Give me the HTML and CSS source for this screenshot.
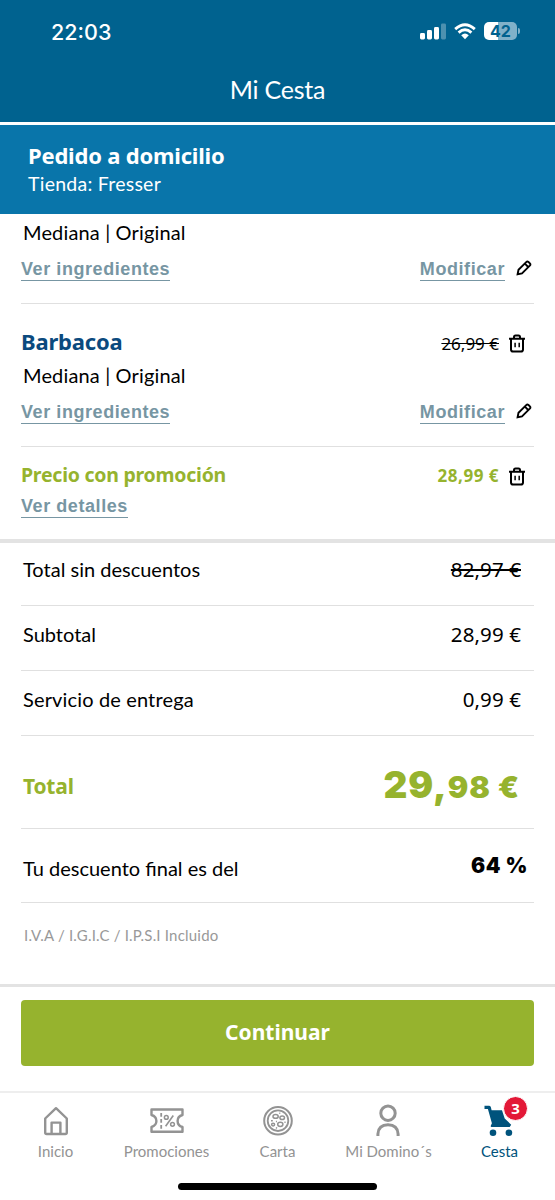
FILE: index.html
```html
<!DOCTYPE html>
<html lang="es">
<head>
  <meta charset="UTF-8" />
  <meta name="viewport" content="width=device-width, initial-scale=1.0" />
  <title>Mi Cesta</title>
  <link rel="stylesheet" href="styles.css">
</head>
<body>
  <svg class="sprite" width="0" height="0">
    <symbol id="pencil" viewBox="0 0 16 16">
      <path d="M1.6 14.2 2.5 9.8 10.2 2.1Q11.3 1 12.5 2L13.9 3.4Q14.9 4.5 13.8 5.7L6 13.4ZM8.9 3.7 12.2 7" />
    </symbol>
    <symbol id="trash" viewBox="0 0 18 19">
      <path d="M1 4.7H17M3 5V15.4Q3 17.5 5.1 17.5H12.9Q15 17.5 15 15.4V5M6 4.3V3Q6 1.5 7.5 1.5H10.5Q12 1.5 12 3V4.3" />
      <path d="M7.1 8.8V13.2M11.2 8.8V13.2" stroke-width="1.5" />
    </symbol>
  </svg>

  <header>
    <div class="status">
      <span class="clock">22:03</span>
      <div class="status-icons">
        <svg class="signal" width="26" height="17" viewBox="0 0 26 17" fill="#fff">
          <rect x="0" y="10" width="5" height="6.5" rx="1.4" />
          <rect x="7" y="7" width="5" height="9.5" rx="1.4" />
          <rect x="14" y="4" width="5" height="12.5" rx="1.4" />
          <rect x="21" y="0.5" width="5" height="16" rx="1.4" opacity="0.3" />
        </svg>
        <svg class="wifi" width="22" height="17" viewBox="0 0 22 17" fill="none" stroke="#fff" stroke-width="2.9">
          <path d="M1.2 6.1Q11 -2.6 20.8 6.1M4.6 9.7Q11 4 17.4 9.7" />
          <path d="M7.2 12.2Q11 8.8 14.8 12.2L11 16.3Z" fill="#fff" stroke="none" />
        </svg>
        <div class="battery">42</div>
      </div>
    </div>
    <h1>Mi Cesta</h1>
  </header>

  <section class="order">
    <h2>Pedido a domicilio</h2>
    <p>Tienda: Fresser</p>
  </section>

  <main>
    <article class="item first">
      <p class="size">Mediana | Original</p>
      <div class="line links">
        <a class="link">Ver ingredientes</a>
        <a class="link edit">Modificar</a>
        <svg class="icon pencil"><use href="#pencil" /></svg>
      </div>
    </article>

    <article class="item">
      <div class="line name">
        <h3>Barbacoa</h3>
        <span class="price"><s>26,99 €</s></span>
        <svg class="icon trash"><use href="#trash" /></svg>
      </div>
      <p class="size">Mediana | Original</p>
      <div class="line links">
        <a class="link">Ver ingredientes</a>
        <a class="link edit">Modificar</a>
        <svg class="icon pencil"><use href="#pencil" /></svg>
      </div>
    </article>

    <article class="item promo">
      <div class="line name">
        <h3>Precio con promoción</h3>
        <span class="price">28,99 €</span>
        <svg class="icon trash"><use href="#trash" /></svg>
      </div>
      <a class="link">Ver detalles</a>
    </article>

    <div class="totals">
      <div class="row before"><span>Total sin descuentos</span><span class="amount"><s>82,97 €</s></span></div>
      <div class="row"><span>Subtotal</span><span class="amount">28,99 €</span></div>
      <div class="row delivery"><span>Servicio de entrega</span><span class="amount">0,99 €</span></div>
      <div class="row total"><span>Total</span><span class="big">29,<small>98 €</small></span></div>
      <div class="row discount"><span>Tu descuento final es del</span><b>64 %</b></div>
      <p class="tax">I.V.A / I.G.I.C / I.P.S.I Incluido</p>
    </div>
  </main>

  <div class="checkout"><button>Continuar</button></div>

  <nav>
    <a class="tab">
      <svg width="40" height="36" viewBox="0 0 40 36">
        <path d="M9.2 15.5 20 5.2 30.8 15.5V29.5Q30.8 31 29.3 31H10.7Q9.2 31 9.2 29.5ZM15.6 31V19.6H24.4V31" />
      </svg>
      <span>Inicio</span>
    </a>
    <a class="tab">
      <svg width="40" height="36" viewBox="0 0 40 36">
        <path d="M4.5 6.5H35.5V12Q30.6 13.3 30.6 18T35.5 24V28.7H4.5V24Q9.4 22.5 9.4 18T4.5 12Z" />
        <path d="M14.2 10V26" stroke-width="1.8" stroke-dasharray="3.8 2.2" />
        <path d="M26.3 12.5 18.6 23.3" stroke-width="1.6" />
        <circle cx="19.3" cy="14.4" r="1.9" stroke-width="1.5" />
        <circle cx="25.5" cy="21.3" r="1.9" stroke-width="1.5" />
      </svg>
      <span>Promociones</span>
    </a>
    <a class="tab">
      <svg width="40" height="36" viewBox="0 0 40 36">
        <circle cx="20" cy="17.7" r="13.8" stroke-width="2" />
        <circle cx="20" cy="17.7" r="10.3" stroke-width="1.8" />
        <g stroke-width="1.5">
          <ellipse cx="17.6" cy="13.4" rx="2.6" ry="1.9" />
          <ellipse cx="24.2" cy="14.7" rx="2.3" ry="1.8" />
          <ellipse cx="15.1" cy="21.6" rx="1.5" ry="1.3" />
          <ellipse cx="22.3" cy="21.3" rx="2.6" ry="2.1" />
          <path d="M13 17.7h1.8M17.9 18.6h1M18 24.5l1 .8M26.4 19.2h1.2M21.3 10.2h1" />
        </g>
      </svg>
      <span>Carta</span>
    </a>
    <a class="tab account">
      <svg width="40" height="36" viewBox="0 0 40 36">
        <circle cx="20" cy="10.2" r="7.2" stroke-width="3" />
        <path d="M9.9 33V31Q10.5 21.8 20 21.8T30.1 31V33" stroke-width="3" />
      </svg>
      <span>Mi Domino´s</span>
    </a>
    <a class="tab active">
      <svg width="40" height="36" viewBox="0 0 40 36">
        <path d="M4.5 2.8H8.9Q10.3 2.8 10.8 4L11.6 7.3H22L24.7 15.5 31.2 21.7 29.7 24H11.6Q10.3 24 10.9 22.4L11.9 20.2 7.9 6.1H4.5Z" fill="#00537c" stroke="none" />
        <circle cx="13" cy="29.7" r="3.3" fill="#00537c" stroke="none" />
        <circle cx="28.9" cy="29.7" r="3.3" fill="#00537c" stroke="none" />
      </svg>
      <i class="badge">3</i>
      <span>Cesta</span>
    </a>
    <div class="home-bar"></div>
  </nav>
</body>
</html>
```
FILE: styles.css
```css
* {
  box-sizing: border-box;
  padding: 0;
  margin: 0;
}

body {
  width: 555px;
  height: 1200px;
  overflow: hidden;
  background: #fff;
  color: #000;
  font-family: Lato, 'Noto Sans', sans-serif;
  font-size: 19px;
}

.sprite {
  display: block;
}

header {
  height: 125px;
  background: #00628f;
  border-bottom: 3px solid #fff;
  color: #fff;
}

.status {
  display: flex;
  justify-content: space-between;
  height: 63px;
  padding: 17px 38px 0 51px;
}

.clock {
  font-family: Inter, sans-serif;
  font-size: 21.5px;
  font-weight: 500;
  line-height: 30px;
}

.status-icons {
  display: flex;
  padding-top: 6px;
}

.wifi {
  margin: 0 8px 0 8px;
}

.battery {
  position: relative;
  width: 33px;
  height: 18px;
  margin: -1px 0 0;
  border-radius: 5px;
  background: linear-gradient(90deg, #fff 42%, #80b1c9 42%);
  color: #00628f;
  font: bold 16px/19px Inter, sans-serif;
  text-align: center;
}

.battery::after {
  content: '';
  position: absolute;
  right: -3px;
  top: 6px;
  width: 2px;
  height: 6px;
  border-radius: 0 2px 2px 0;
  background: #80b1c9;
}

h1 {
  font-size: 25px;
  font-weight: 400;
  line-height: 52px;
  letter-spacing: -0.2px;
  text-align: center;
}

.order {
  height: 89px;
  padding: 16px 28px 0;
  background: #0975aa;
  color: #fff;
}

h2 {
  font: bold 22px/29px 'Noto Sans', sans-serif;
  letter-spacing: -0.2px;
}

.order p {
  font-size: 19.5px;
  line-height: 27px;
  letter-spacing: 0.25px;
}

.item {
  height: 143px;
  margin: 0 21px;
  padding-top: 20px;
  border-bottom: 1px solid #e0e0e0;
}

.item.first {
  height: 90px;
  padding-top: 4px;
}

.size {
  padding-left: 2px;
  font-size: 20px;
  line-height: 28px;
  letter-spacing: 0.15px;
}

.line {
  display: flex;
  align-items: center;
}

.name {
  height: 35px;
}

.item .size {
  margin-top: 2px;
}

.item.first .size {
  margin-top: 0;
}

h3 {
  margin-top: -2px;
  color: #0b4a7e;
  font: bold 22px/28px 'Noto Sans', sans-serif;
  letter-spacing: -0.2px;
}

.price {
  margin: 4px 9px 0 auto;
  font: 17px 'Noto Sans', sans-serif;
}

.icon {
  fill: none;
  stroke: #000;
  stroke-width: 2;
}

.pencil {
  width: 16px;
  height: 16px;
  margin: 0 2px 0 11px;
  stroke-width: 1.9;
}

.trash {
  width: 18px;
  height: 19px;
  margin-top: 3px;
  margin-right: 8px;
}

.links {
  height: 26px;
  margin-top: 9px;
}

.link {
  display: block;
  width: fit-content;
  height: 25px;
  border-bottom: 1px solid #7796a3;
  color: #7796a3;
  font: bold 18px/26px 'Liberation Sans', sans-serif;
  letter-spacing: 0.57px;
}

.edit {
  margin-left: auto;
}

.item.promo {
  height: 92px;
  padding-top: 10px;
  border: 0;
}

.promo .link {
  margin-top: 1px;
}

.promo h3,
.promo .price {
  color: #96b32e;
}

.promo h3 {
  margin-top: 0;
  font-size: 19.5px;
  letter-spacing: -0.25px;
}

.promo .price {
  margin-top: 2px;
  font-weight: 700;
  letter-spacing: 0.5px;
}

.totals {
  padding: 0 21px;
  height: 448px;
  border-top: 4px solid #e3e3e3;
  border-bottom: 3px solid #e3e3e3;
}

.row {
  display: flex;
  align-items: center;
  justify-content: space-between;
  height: 65px;
  padding: 0 13px 9px 2px;
  border-bottom: 1px solid #e0e0e0;
  font-size: 20px;
}

.row.before {
  height: 63px;
  padding-bottom: 10px;
}

.delivery {
  letter-spacing: 0.15px;
}

.amount {
  font: 20.5px 'Noto Sans', sans-serif;
  letter-spacing: 0.1px;
}

.row.total {
  height: 93px;
  padding: 8px 14px 0 2px;
  color: #96b32e;
  font: bold 21px 'Noto Sans', sans-serif;
  letter-spacing: -0.2px;
}

.big {
  padding-bottom: 4px;
  font: 900 37px Inter, sans-serif;
  letter-spacing: 0.9px;
}

.big small {
  font-size: 30.5px;
}

.row.discount {
  height: 74px;
  padding: 5px 6px 0 2px;
}

.discount b {
  padding-bottom: 6px;
  font: 900 21px Inter, sans-serif;
  letter-spacing: 0.5px;
}

.tax {
  padding-left: 3px;
  color: #999;
  font-size: 15px;
  line-height: 64px;
  letter-spacing: 0.2px;
}

.checkout {
  height: 104px;
  padding: 13px 21px 0;
}

button {
  display: block;
  width: 100%;
  height: 66px;
  padding-bottom: 3px;
  border: 0;
  border-radius: 4px;
  background: #96b32e;
  color: #fff;
  font: bold 21px 'Noto Sans', sans-serif;
}

nav {
  display: flex;
  flex-wrap: wrap;
  align-content: flex-start;
  height: 109px;
  border-top: 2px solid #eee;
}

.tab {
  position: relative;
  display: flex;
  flex-direction: column;
  align-items: center;
  width: 111px;
  height: 90px;
  padding-top: 10px;
  color: #939393;
  font-size: 15px;
}

.tab svg {
  fill: none;
  stroke: #939393;
  stroke-width: 2.4;
  stroke-linejoin: round;
}

.tab span {
  line-height: 24px;
}

.account svg {
  margin-right: 1px;
}

.tab.active {
  color: #00537c;
}

.badge {
  position: absolute;
  left: 59px;
  top: 3px;
  width: 25px;
  height: 25px;
  border: 1px solid #fff;
  border-radius: 50%;
  background: #e31837;
  color: #fff;
  font: bold 15px/23px 'Noto Sans', sans-serif;
  text-align: center;
}

.home-bar {
  width: 199px;
  height: 7px;
  margin: 0 auto;
  border-radius: 4px;
  background: #000;
}
```
